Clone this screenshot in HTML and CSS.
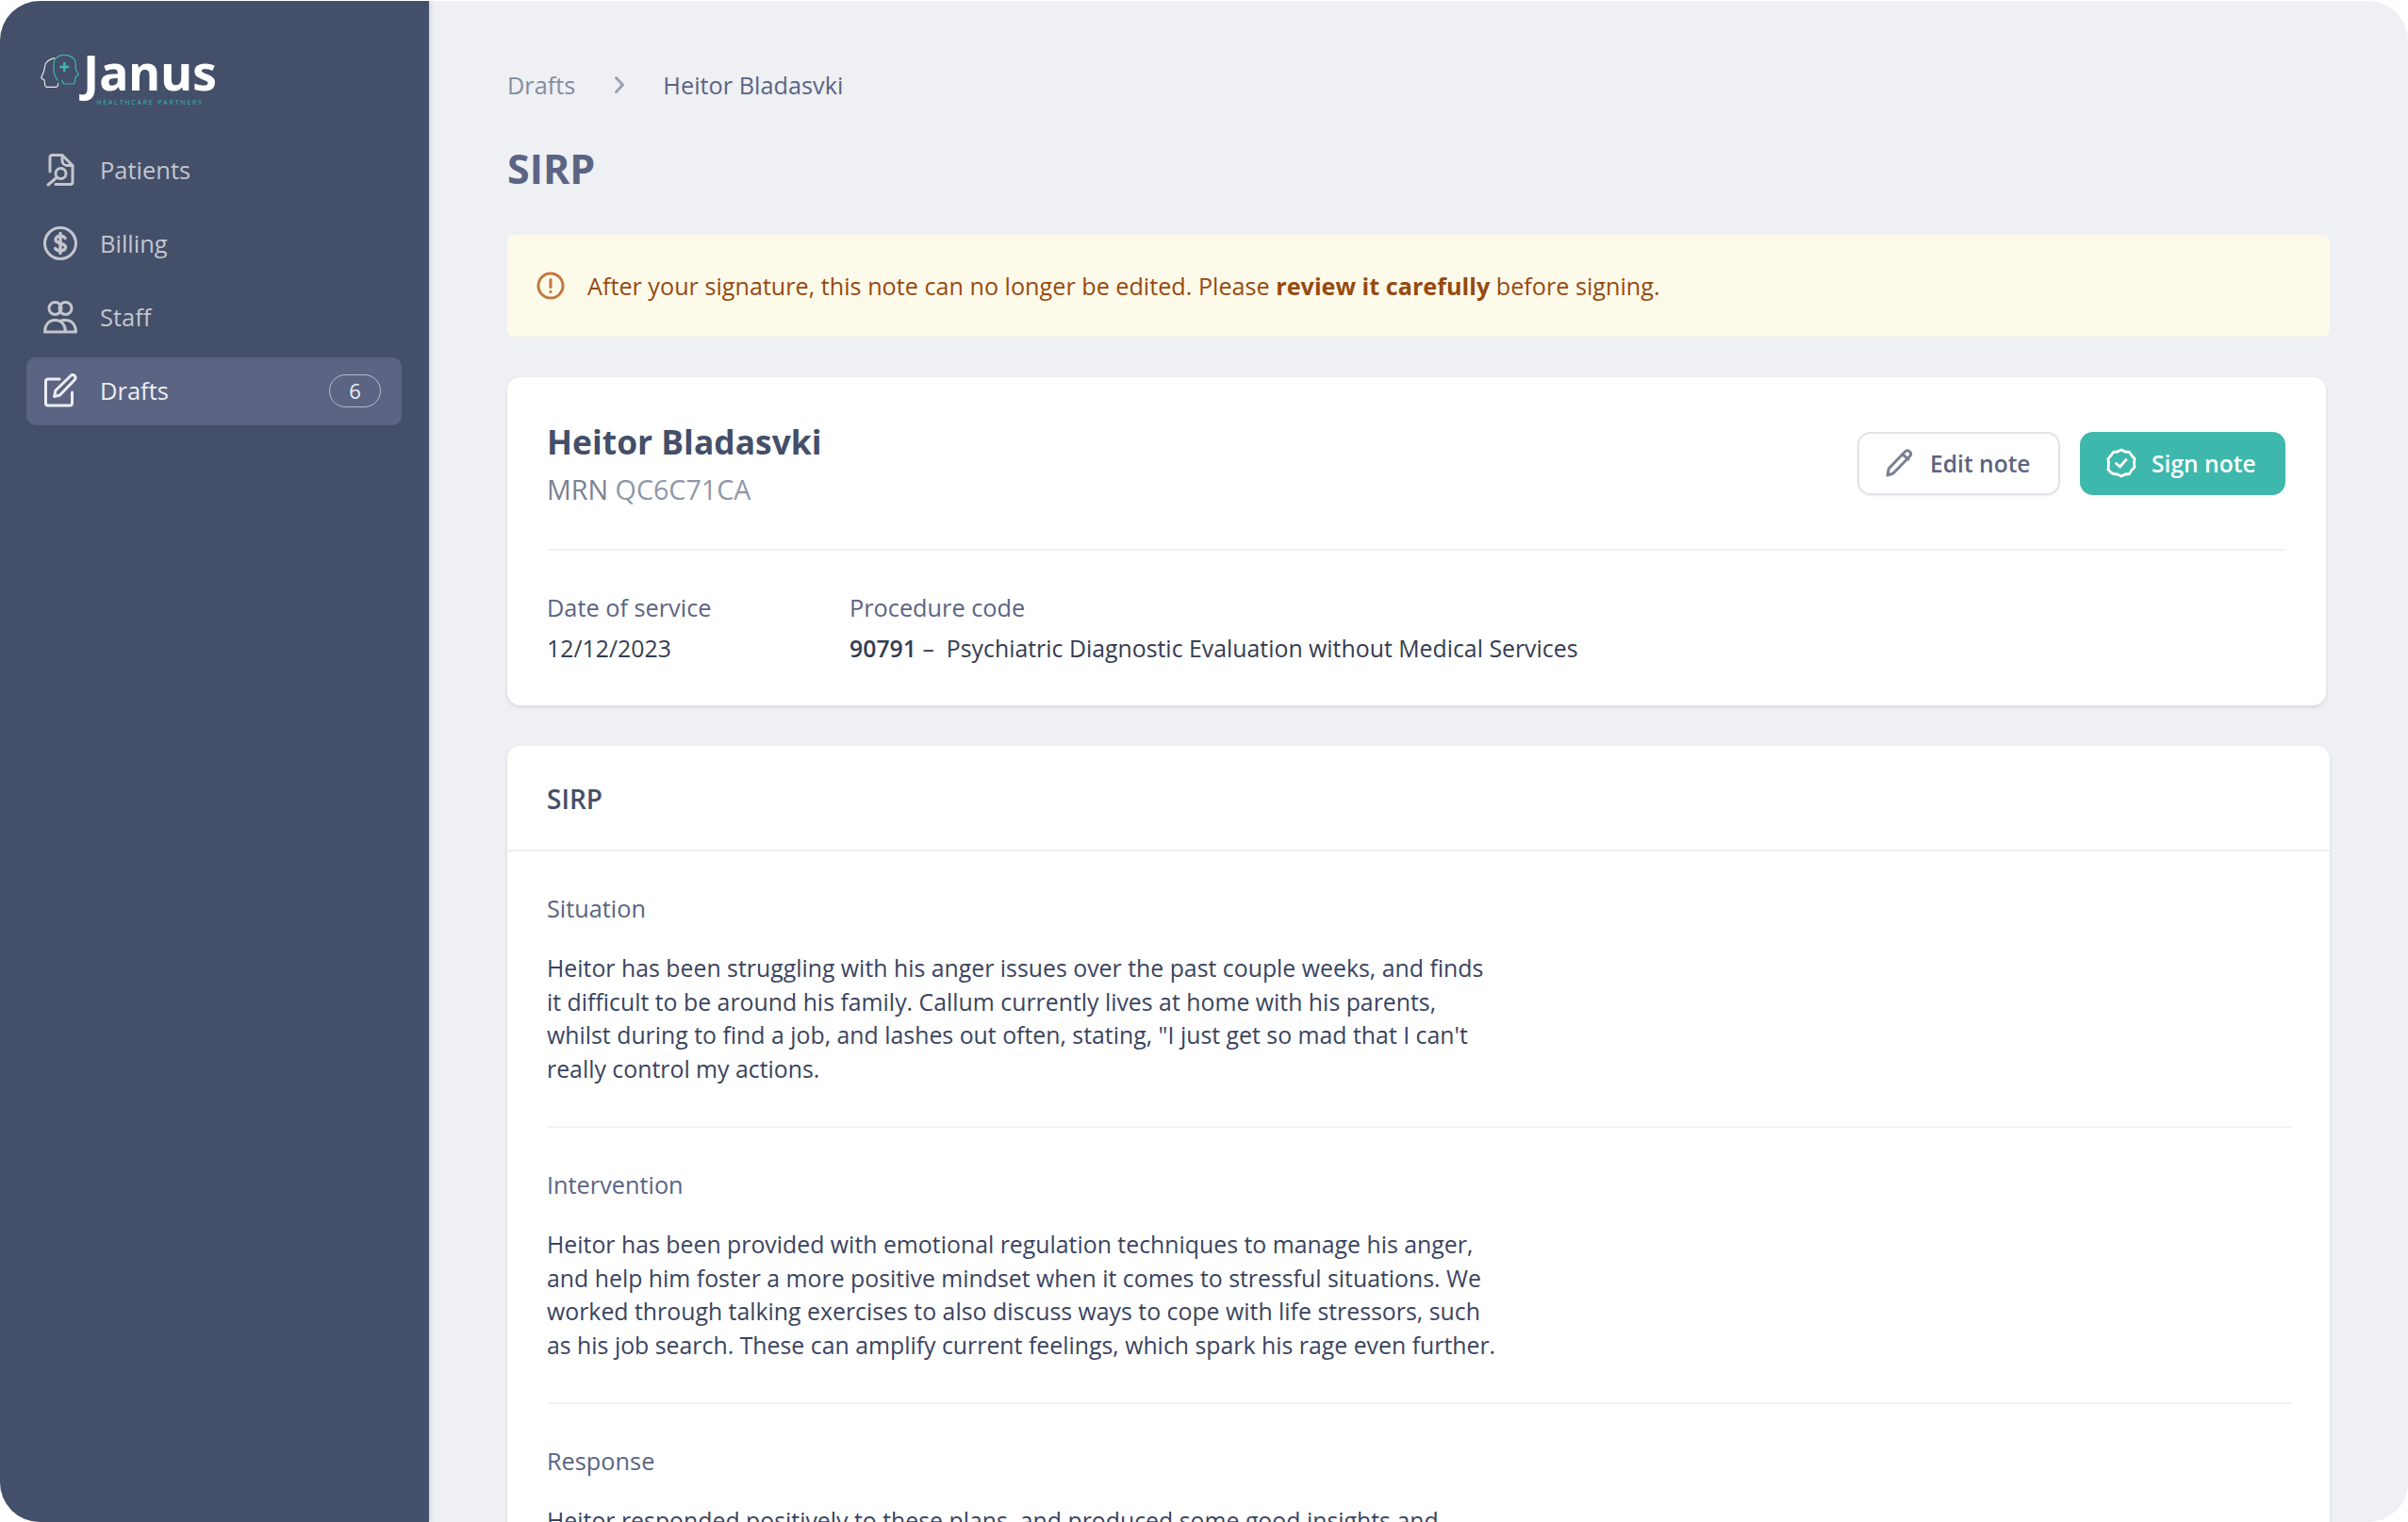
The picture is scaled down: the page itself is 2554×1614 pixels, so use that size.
FILE: index.html
```html
<!DOCTYPE html>
<html lang="en">
<head>
    <meta charset="UTF-8">
    <meta name="viewport" content="width=device-width, initial-scale=1.0">
    <title>SIRP - Heitor Bladasvki</title>
    <link rel="stylesheet" href="styles.css">
</head>
<body>
    <div class="app">
        <!-- sidebar -->
        <aside class="side">
            <div class="logo">
                <svg class="logo-mark" viewBox="-1 -1 41 37" fill="none" stroke-width="1.2" stroke-linecap="round" stroke-linejoin="round">
                    <path stroke="#e6e8ec" d="M13.7 3.700C7.500 5 3.700 8.500 3.700 12c-.3 2.500-.7 4.500-1.700 6.700L-.3 24.700 3 27l.7 5c.2 1.500.8 2.300 1.600 2.300h10c1.500 0 2.400-1.500 2.400-4"/>
                    <path stroke="#3eb8ac" d="M17 27c-1-2-4-5-4-10-.2-4 .2-8.500.7-11.700 3-3.500 6.500-5 10-5 5 0 9.500 2 11.600 5 1 3 1 6.500 1 10l3 6-3.300 2.400-.7 5.600c-.2 1-1.500 1.700-3.300 1.700h-6.700c-2 0-3.300-1.500-3.300-4"/>
                    <path stroke="#3eb8ac" stroke-width="2.400" stroke-linecap="butt" d="M24.300 8v10M19.300 13h10"/>
                </svg>
                <div class="logo-txt">
                    <span class="logo-name">Janus</span>
                    <span class="logo-sub">HEALTHCARE PARTNERS</span>
                </div>
            </div>
            <nav class="nav">
                <a class="nav-item">
                    <svg class="nav-ico" viewBox="0 0 36 36" fill="none" stroke="currentColor" stroke-width="3" stroke-linecap="round" stroke-linejoin="round">
                        <path d="M7 20V5c0-1.500 1-2.500 2.500-2.500H20l11 11V31c0 1.500-1 2.500-2.500 2.500H13"/>
                        <path d="M20 2.500V8c0 3 2 5.500 5 5.500h6"/>
                        <circle cx="18.500" cy="22" r="5.500"/>
                        <path d="M14.500 26L5 34"/>
                    </svg>
                    <span>Patients</span>
                </a>
                <a class="nav-item">
                    <svg class="nav-ico" viewBox="0 0 36 36" fill="none" stroke="currentColor" stroke-width="3" stroke-linecap="round" stroke-linejoin="round">
                        <circle cx="18" cy="18" r="16.500"/>
                        <path stroke-width="3.400" d="M23 12.500c-1-1.500-3-2.200-5-2.200-3 0-5 1.500-5 3.800 0 5.500 10.500 2.500 10.500 8 0 2.300-2.200 3.800-5.500 3.800-2.200 0-4.200-.8-5.300-2.400M18 7.500v21"/>
                    </svg>
                    <span>Billing</span>
                </a>
                <a class="nav-item">
                    <svg class="nav-ico" viewBox="0 0 36 36" fill="none" stroke="currentColor" stroke-width="3" stroke-linecap="round" stroke-linejoin="round">
                        <circle cx="12.500" cy="9" r="6.500"/>
                        <circle cx="23.500" cy="9" r="6.500"/>
                        <path d="M1.500 34c0-7 4-12.500 11-12.500s11 5.500 11 12.500zM19 22c1.500-.5 3-.8 4.500-.5 7 0 11 5.500 11 12.500H23.500"/>
                    </svg>
                    <span>Staff</span>
                </a>
                <a class="nav-item on">
                    <svg class="nav-ico" viewBox="0 0 36 36" fill="none" stroke="currentColor" stroke-width="3" stroke-linecap="round" stroke-linejoin="round">
                        <path d="M17 6H5C3.500 6 2.500 7 2.500 8.500v23c0 1.500 1 2.500 2.500 2.500h23c1.500 0 2.500-1 2.500-2.500V20"/>
                        <path d="M13 18L29 2.500c1.200-1.200 3-1.200 4.200 0s1.200 3 0 4.200L17.500 23l-6 1.500z"/>
                    </svg>
                    <span>Drafts</span>
                    <span class="count">6</span>
                </a>
            </nav>
        </aside>

        <!-- main -->
        <main class="main">
            <div class="crumb">
                <span class="crumb-a">Drafts</span>
                <svg class="crumb-sep" viewBox="0 0 12 20" fill="none" stroke="#9aa1b1" stroke-width="3" stroke-linecap="round" stroke-linejoin="round"><path d="M2.500 2.500L9.500 10l-7 7.500"/></svg>
                <span class="crumb-b">Heitor Bladasvki</span>
            </div>
            <h1 class="title">SIRP</h1>

            <div class="alert">
                <svg class="alert-ico" viewBox="0 0 30 30" fill="none" stroke="#c2783f" stroke-width="3" stroke-linecap="round"><circle cx="15" cy="15" r="13"/><path d="M15 8.500v8M15 21.200v.3"/></svg>
                <p>After your signature, this note can no longer be edited. Please <b>review it carefully</b> before signing.</p>
            </div>

            <section class="card head-card">
                <div class="who">
                    <div>
                        <h2 class="who-name">Heitor Bladasvki</h2>
                        <div class="mrn">MRN <span>QC6C71CA</span></div>
                    </div>
                    <div class="btns">
                        <a class="btn btn-line">
                            <svg viewBox="0 0 32 32" fill="none" stroke="#7b8093" stroke-width="3" stroke-linecap="round" stroke-linejoin="round"><path d="M3 29l1.200-7L21.500 4c1.500-1.500 3.500-1.500 5 0s1.500 3.500 0 5L9 27z"/><path d="M19 7l6 5"/></svg>
                            Edit note
                        </a>
                        <a class="btn btn-fill">
                            <svg viewBox="0 0 32 32" fill="none" stroke="#fff" stroke-width="2.800" stroke-linecap="round" stroke-linejoin="round"><path d="M16 2l4 2 4.500.5 2.500 3.500 3 3.500-.5 4.500.5 4.500-3 3-2.500 4-4.500.5-4 2-4-2-4.500-.5L5 26l-3-3 .5-7L2 11.500 5 8l2.500-3.500L12 4z"/><path d="M10.500 16.500l4 3.500 6.500-7.500"/></svg>
                            Sign note
                        </a>
                    </div>
                </div>
                <div class="meta">
                    <div class="meta-col">
                        <div class="lbl">Date of service</div>
                        <div class="val">12/12/2023</div>
                    </div>
                    <div class="meta-col">
                        <div class="lbl">Procedure code</div>
                        <div class="val"><b>90791</b> –&nbsp; Psychiatric Diagnostic Evaluation without Medical Services</div>
                    </div>
                </div>
            </section>

            <section class="card note-card">
                <h3 class="note-h">SIRP</h3>
                <div class="note-body">
                    <div class="block">
                        <div class="lbl">Situation</div>
                        <p class="txt">Heitor has been struggling with his anger issues over the past couple weeks, and finds<br>it difficult to be around his family. Callum currently lives at home with his parents,<br>whilst during to find a job, and lashes out often, stating, "I just get so mad that I can't<br>really control my actions.</p>
                    </div>
                    <div class="block">
                        <div class="lbl">Intervention</div>
                        <p class="txt">Heitor has been provided with emotional regulation techniques to manage his anger,<br>and help him foster a more positive mindset when it comes to stressful situations. We<br>worked through talking exercises to also discuss ways to cope with life stressors, such<br>as his job search. These can amplify current feelings, which spark his rage even further.</p>
                    </div>
                    <div class="block">
                        <div class="lbl">Response</div>
                        <p class="txt">Heitor responded positively to these plans, and produced some good insights and</p>
                    </div>
                </div>
            </section>
        </main>
    </div>
</body>
</html>
```

FILE: styles.css
```css
html,body{
    margin: 0;
    padding: 0;
    height: 100%;
    background: #fff;
}
body{
    box-sizing: border-box;
    padding-top: 1px;
    font-family: "Open Sans", "Noto Sans", sans-serif;
    color: #3a4460;
    overflow: hidden;
}
p,h1,h2,h3{
    margin: 0;
}

/* 전체 틀 */
.app{
    display: flex;
    width: 2554px;
    height: 1613px;
    border-radius: 42px;
    overflow: hidden;
    background: #eef0f4;
}

/* 사이드바 */
.side{
    flex: 0 0 455px;
    box-sizing: border-box;
    padding: 47px 29px 0 28px;
    background: #444f69;
    box-shadow: 3px 0 4px rgba(60,70,100,.12);
}
.logo{
    display: flex;
    align-items: flex-start;
    gap: 4px;
    height: 83px;
    padding-left: 15px;
}
.logo-mark{
    width: 41px;
    height: 37px;
    margin-top: 9px;
}
.logo-txt{
    display: flex;
    flex-direction: column;
    align-items: center;
}
.logo-name{
    font-family: "Noto Sans", sans-serif;
    font-size: 52px;
    font-weight: 700;
    line-height: 56px;
    color: #fff;
}
.logo-sub{
    font-size: 7px;
    line-height: 10px;
    letter-spacing: 1.8px;
    white-space: nowrap;
    color: #3eb8ac;
}
.nav{
    display: flex;
    flex-direction: column;
    gap: 6px;
    margin-top: 14px;
}
.nav-item{
    display: flex;
    align-items: center;
    height: 72px;
    padding: 0 22px 2px 18px;
    box-sizing: border-box;
    border-radius: 10px;
    font-size: 25.5px;
    color: #c3c6ce;
}
.nav-item>span:first-of-type{
    flex: 1;
}
.nav-ico{
    flex: none;
    width: 36px;
    height: 36px;
    margin-right: 24px;
}
.nav-item.on{
    background: #5b6483;
    color: #eceef2;
}
.count{
    flex: none;
    width: 55px;
    height: 35px;
    box-sizing: border-box;
    border: 1.5px solid #b9bdc8;
    border-radius: 18px;
    text-align: center;
    font-size: 22px;
    line-height: 33px;
}

/* 본문 */
.main{
    flex: 1;
    min-width: 0;
    padding: 67px 83px 0 83px;
}
.crumb{
    display: flex;
    align-items: center;
    height: 44px;
    font-size: 25.3px;
}
.crumb-a{
    color: #858ca0;
}
.crumb-sep{
    width: 12px;
    height: 20px;
    margin: 0 40px 0 41px;
}
.crumb-b{
    color: #5b6483;
}
.title{
    margin-top: 37px;
    font-size: 43px;
    font-weight: 700;
    line-height: 60px;
    color: #5b6483;
}
.alert{
    display: flex;
    align-items: center;
    height: 108px;
    margin-top: 40px;
    padding-left: 31px;
    border-radius: 8px;
    background: #fefaea;
    font-size: 25.2px;
    color: #964a10;
}
.alert-ico{
    width: 30px;
    height: 30px;
    margin-right: 24px;
}

/* 카드 */
.card{
    background: #fff;
    border-radius: 14px;
    box-shadow: 0 2px 4px rgba(60,70,100,.14);
}
.head-card{
    box-sizing: border-box;
    height: 348px;
    margin-top: 43px;
    margin-right: 4px;
    padding: 0 43px 0 42px;
}
.who{
    display: flex;
    justify-content: space-between;
    box-sizing: border-box;
    height: 184px;
    border-bottom: 2px solid #f1f2f5;
}
.who-name{
    margin-top: 43px;
    font-size: 35.4px;
    font-weight: 700;
    line-height: 50px;
    color: #444f69;
}
.mrn{
    margin-top: 6px;
    font-size: 28.7px;
    line-height: 40px;
    color: #7b8093;
}
.mrn span{
    color: #9097a7;
}
.btns{
    display: flex;
    gap: 21px;
    margin-top: 58px;
}
.btn{
    display: flex;
    align-items: center;
    box-sizing: border-box;
    height: 67px;
    padding-bottom: 1px;
    border-radius: 14px;
    font-size: 24.6px;
    font-weight: 600;
}
.btn svg{
    width: 32px;
    height: 32px;
    margin-right: 16px;
}
.btn-line{
    width: 215px;
    padding-left: 27px;
    border: 2px solid #e3e4ea;
    color: #5b6483;
    box-shadow: 0 1px 2px rgba(60,70,100,.1);
}
.btn-fill{
    width: 218px;
    padding-left: 28px;
    background: #3eb8ac;
    color: #fff;
}
.meta{
    display: flex;
    padding-top: 42px;
}
.meta-col:first-child{
    flex: 0 0 321px;
}
.lbl{
    font-size: 25.3px;
    line-height: 36px;
    color: #5b6483;
}
.val{
    margin-top: 7px;
    font-size: 24.85px;
    line-height: 36px;
    color: #353c52;
}
.val b{
    font-weight: 600;
}
.note-card{
    margin-top: 43px;
    height: 900px;
}
.note-h{
    box-sizing: border-box;
    height: 112px;
    padding: 0 42px;
    border-bottom: 2px solid #eceef2;
    font-size: 28px;
    font-weight: 600;
    line-height: 112px;
    color: #444f69;
}
.note-body{
    padding: 0 40px 0 42px;
}
.block{
    padding: 42px 0;
    border-bottom: 2px solid #f1f2f5;
}
.block:last-child{
    border-bottom: 0;
}
.txt{
    margin-top: 28px;
    font-size: 24.85px;
    line-height: 35.7px;
    color: #3a4460;
}
```
